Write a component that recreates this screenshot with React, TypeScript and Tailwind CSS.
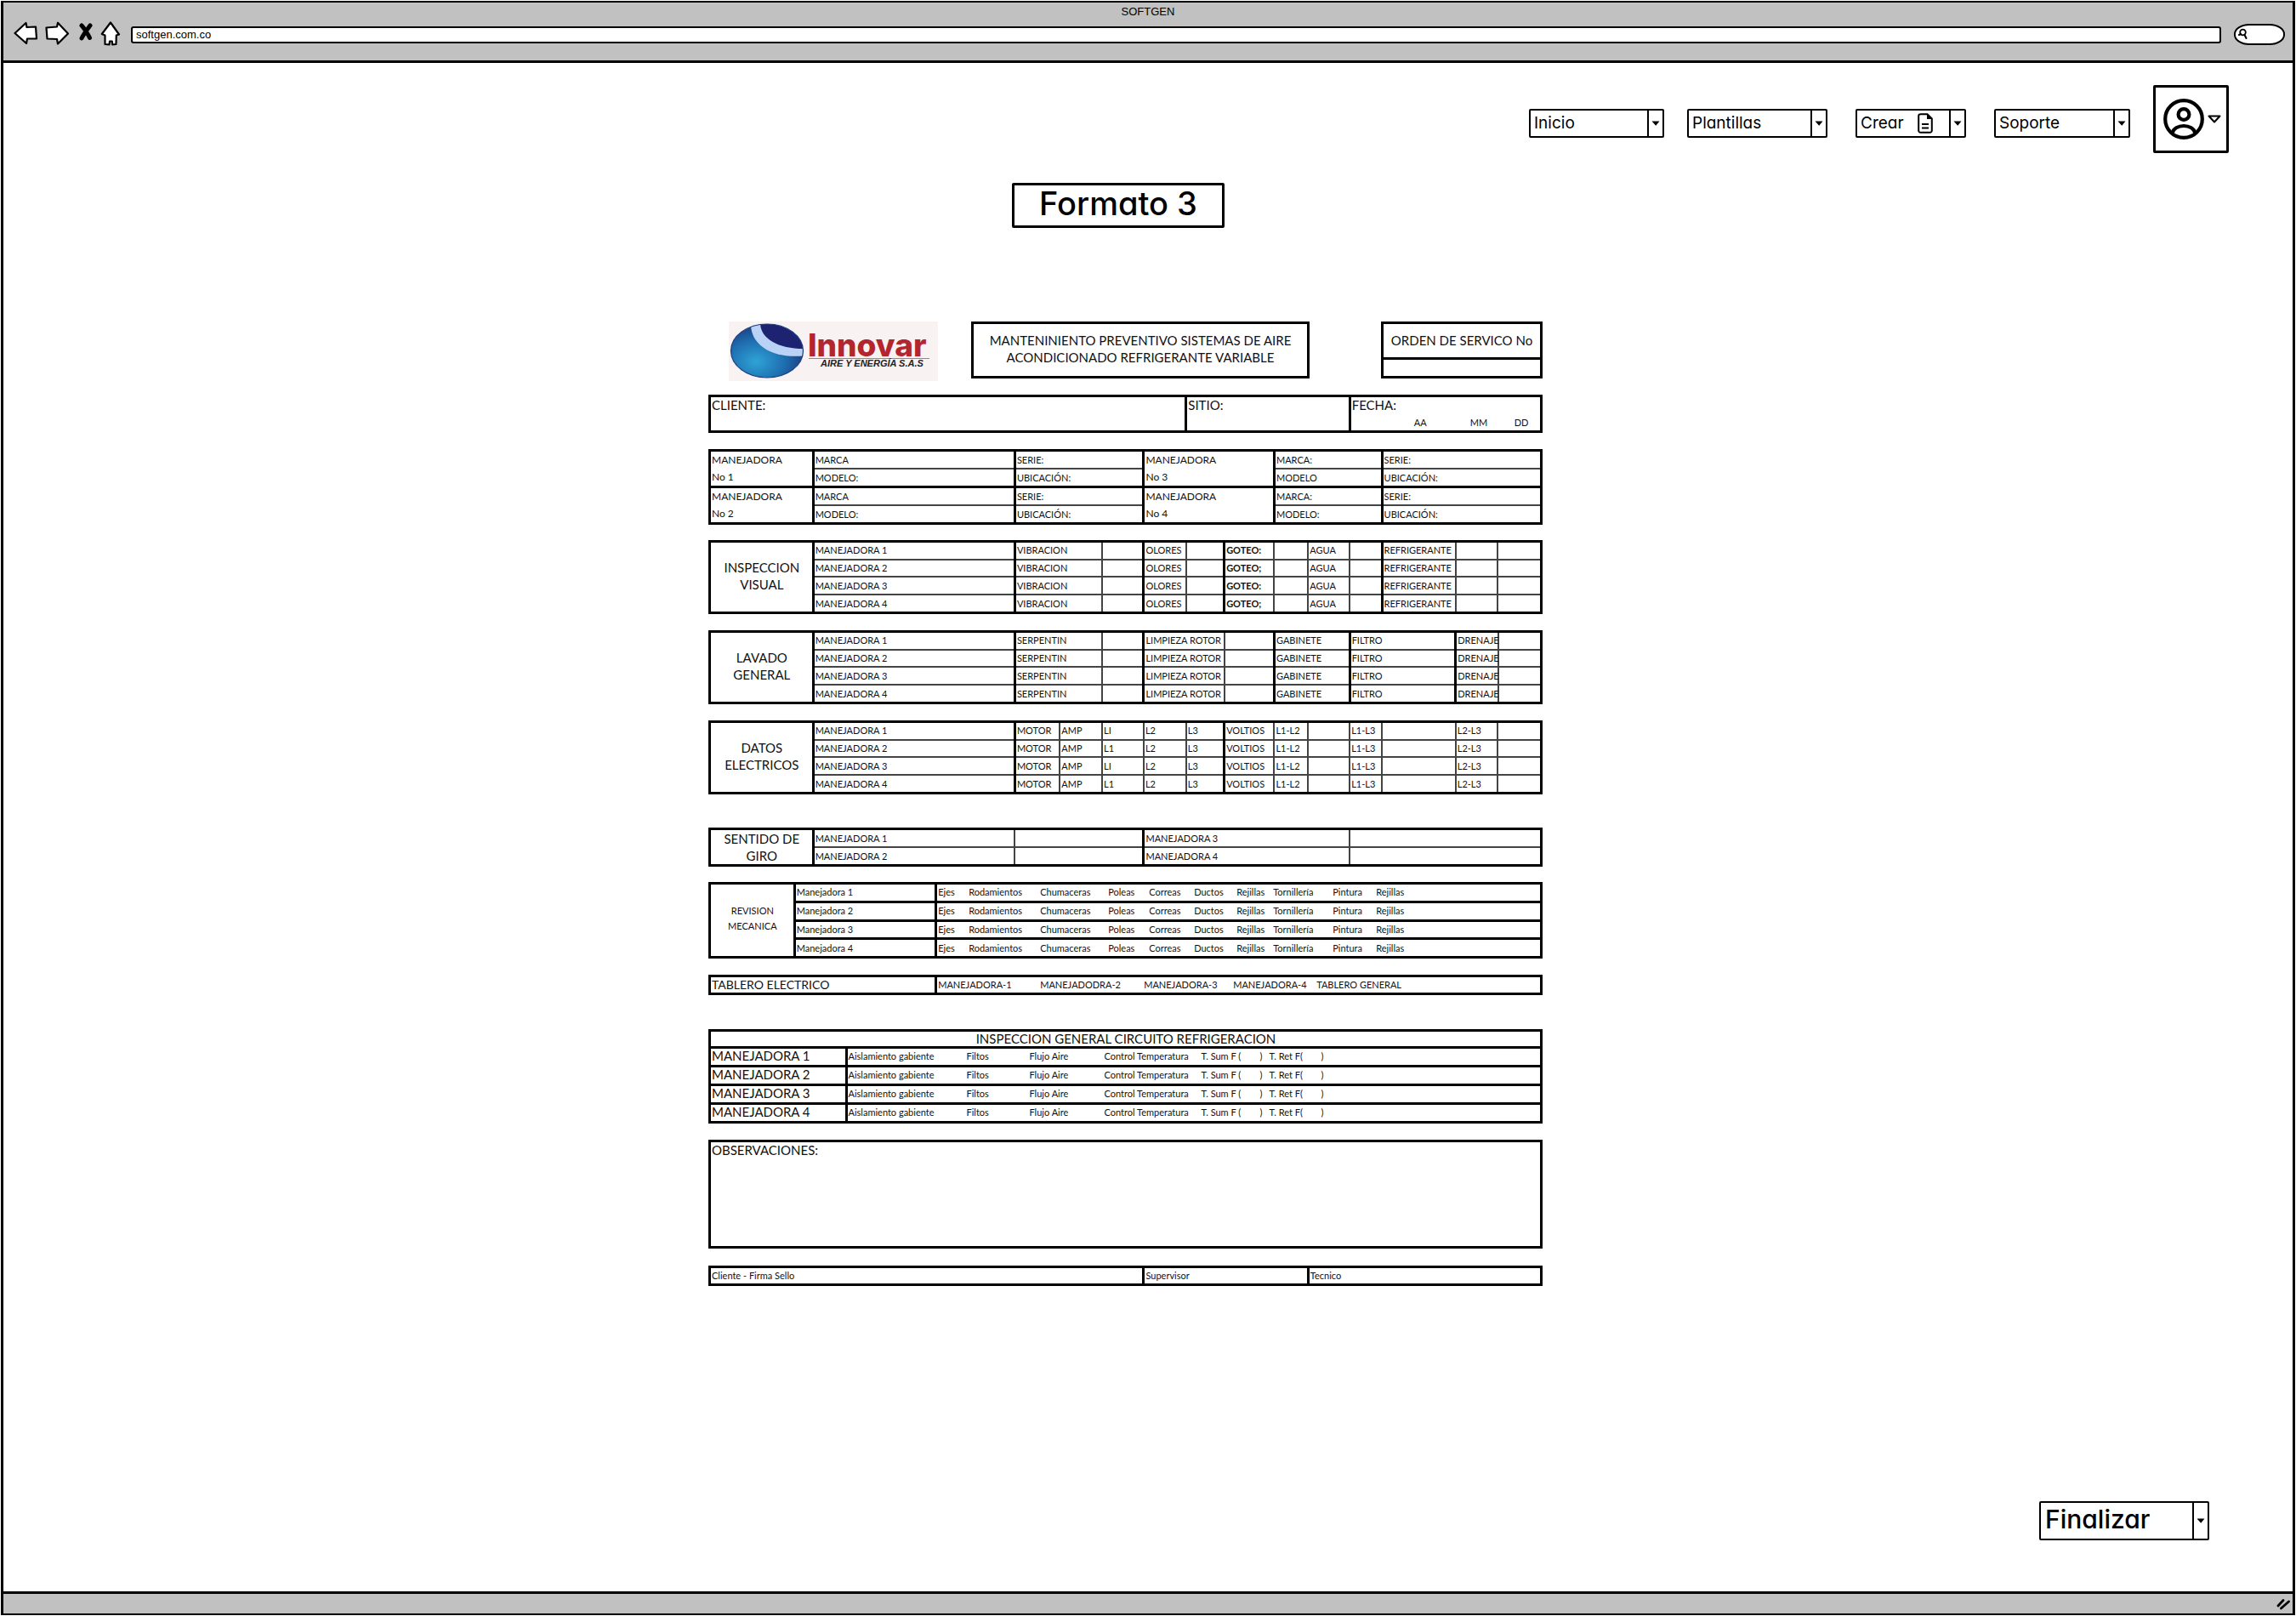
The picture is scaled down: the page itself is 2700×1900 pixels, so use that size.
import React from "react";

const THICK = "border-l-[3px] border-l-black";
const TOP = "border-t-[3px] border-t-black";
const HAND = "font-['Inter',sans-serif] [font-feature-settings:'cv11','ss03']";

/* ---------- wireframe controls ---------- */

type DropProps = {
  label: string;
  box: string;
  text: string;
  arrow: string;
  icon?: React.ReactNode;
};

function Drop({ label, box, text, arrow, icon }: DropProps) {
  return (
    <div className={`relative flex items-stretch rounded-[2px] border-2 border-black bg-white ${box}`}>
      <select aria-label={label} className={`w-full cursor-pointer appearance-none bg-transparent outline-none ${text}`}>
        <option>{label}</option>
      </select>
      {icon}
      <span className={`pointer-events-none absolute inset-y-0 right-0 flex items-center justify-center border-l-2 border-black ${arrow}`}>
        <svg viewBox="0 0 10 6" className="h-[6px] w-[10px]" aria-hidden="true">
          <path d="M0.5 0.5 L9.5 0.5 L5.2 5.8 Z" fill="#000" />
        </svg>
      </span>
    </div>
  );
}

function BrowserBar() {
  const btn = "flex items-center justify-center";
  return (
    <header className="flex h-[71px] flex-col border-b-[3px] border-black bg-[#c1c1c1] font-['Liberation_Sans',sans-serif] text-[13px] text-black">
      <div className="pt-[2px] text-center leading-[18px]">SOFTGEN</div>
      <div className="mt-px flex items-center pl-[12px] pr-[9px]">
        <button aria-label="Atrás" className={btn}>
          <svg viewBox="0 0 28 28" className="h-7 w-7">
            <path d="M1.5 14 L14.5 2 L15.5 7 L26 6.5 L27 20.5 L16 20.5 L15 26 Z" fill="#fff" stroke="#000" strokeWidth="2.2" strokeLinejoin="round" />
          </svg>
        </button>
        <button aria-label="Adelante" className={`ml-[9px] ${btn}`}>
          <svg viewBox="0 0 28 28" className="h-7 w-7">
            <path d="M1.5 7.5 L14 6.5 L15 1.8 L27 14.5 L15 26.5 L14 21 L2.5 20.5 Z" fill="#fff" stroke="#000" strokeWidth="2.2" strokeLinejoin="round" />
          </svg>
        </button>
        <button aria-label="Detener" className={`ml-[12px] ${btn}`}>
          <svg viewBox="0 0 16 28" className="h-7 w-4">
            <path d="M3 5 C5 7 10.500 15 12.500 19.500 M13 5 C10 9 6 14 3 20" fill="none" stroke="#000" strokeWidth="5" strokeLinecap="round" />
          </svg>
        </button>
        <button aria-label="Inicio" className={`ml-[9px] ${btn}`}>
          <svg viewBox="0 0 24 30" className="h-[30px] w-6">
            <path d="M12 2.5 L22 16.5 L18.8 17.5 L18.5 28 L14.2 28.3 L13.8 24.5 L11 24.5 L10.6 28.3 L5.5 28 L5.5 17.5 L1.8 16 Z" fill="#fff" stroke="#000" strokeWidth="2.2" strokeLinejoin="round" />
          </svg>
        </button>
        <input
          aria-label="Dirección"
          defaultValue="softgen.com.co"
          className="ml-[12px] mt-[3px] h-[20px] min-w-0 flex-1 rounded-[3px] border-2 border-black bg-white pl-[4px] leading-4 outline-none"
        />
        <label className="ml-[15px] mt-[2px] flex h-[25px] w-[60px] items-center rounded-[18px/12px] border-2 border-black bg-white pl-[3px]">
          <svg viewBox="0 0 12 14" className="h-[14px] w-3 shrink-0" aria-hidden="true">
            <circle cx="5.5" cy="5" r="3.3" fill="none" stroke="#000" strokeWidth="1.8" />
            <path d="M1 8 L3 7 M7.5 8 L9.5 12" stroke="#000" strokeWidth="2" strokeLinecap="round" />
          </svg>
          <input aria-label="Buscar" className="w-full min-w-0 bg-transparent outline-none" />
        </label>
      </div>
    </header>
  );
}

function FileIcon() {
  return (
    <svg viewBox="0 0 18 24" className="pointer-events-none absolute left-[71px] top-[3px] h-6 w-[18px]" aria-hidden="true">
      <path d="M3.5 1.2 H11.5 L16.8 6.5 V20.5 A2.3 2.3 0 0 1 14.5 22.8 H3.5 A2.3 2.3 0 0 1 1.2 20.5 V3.5 A2.3 2.3 0 0 1 3.5 1.2 Z" fill="none" stroke="#000" strokeWidth="2" />
      <path d="M11 1 V7 H17 Z" fill="#000" />
      <path d="M5 13 H13 M5 17.5 H13" stroke="#000" strokeWidth="2" />
    </svg>
  );
}

function NavBar() {
  const text = "pl-[4px] text-[19px] leading-6";
  return (
    <nav className={`flex items-center justify-end pr-[75px] pt-[26px] ${HAND}`}>
      <div className="mt-2.5 flex items-center">
        <Drop label="Inicio" box="h-[34px] w-[159px]" text={text} arrow="w-[18px]" />
        <Drop label="Plantillas" box="ml-[27px] h-[34px] w-[165px]" text={text} arrow="w-[18px]" />
        <Drop label="Crear" box="ml-[33px] h-[34px] w-[130px]" text={text} arrow="w-[18px]" icon={<FileIcon />} />
        <Drop label="Soporte" box="ml-[33px] h-[34px] w-[160px]" text={text} arrow="w-[18px]" />
      </div>
      <button aria-label="Cuenta" className="ml-[27px] flex h-[80px] w-[89px] items-center rounded-[2px] border-[3px] border-black pl-[9px]">
        <svg viewBox="0 0 48 48" className="h-12 w-12 shrink-0" aria-hidden="true">
          <defs>
            <clipPath id="face">
              <circle cx="24" cy="24" r="22" />
            </clipPath>
          </defs>
          <circle cx="24" cy="24" r="21.8" fill="none" stroke="#000" strokeWidth="4.2" />
          <circle cx="24" cy="18.5" r="6.4" fill="none" stroke="#000" strokeWidth="4.2" />
          <path d="M10.5 41 C12 29 36 29 37.500 41" fill="none" stroke="#000" strokeWidth="4.2" clipPath="url(#face)" />
        </svg>
        <svg viewBox="0 0 16 10" className="ml-[4px] h-[10px] w-4 shrink-0" aria-hidden="true">
          <path d="M1.500 1.500 H14.500 L8 8.500 Z" fill="#fff" stroke="#000" strokeWidth="2" strokeLinejoin="round" />
        </svg>
      </button>
    </nav>
  );
}

/* ---------- form sheet ---------- */

type Cell = { t?: React.ReactNode; c?: string; rs?: number; cs?: number };

function FormTable({ edges, rows, className, label }: { edges: number[]; rows: Cell[][]; className: string; label: string }) {
  const total = edges[edges.length - 1] - edges[0];
  return (
    <table aria-label={label} className={`w-full table-fixed border-collapse border-[3px] border-black text-[11px] leading-[14px] ${className}`}>
      <colgroup>
        {edges.slice(1).map((e, i) => (
          <col key={i} style={{ width: `${((e - edges[i]) / total) * 100}%` }} />
        ))}
      </colgroup>
      <tbody>
        {rows.map((r, i) => (
          <tr key={i}>
            {r.map((c, j) => (
              <td key={j} rowSpan={c.rs} colSpan={c.cs} className={`whitespace-nowrap border-2 border-[#444] p-0 pl-px ${c.c ?? ""}`}>
                {c.t}
              </td>
            ))}
          </tr>
        ))}
      </tbody>
    </table>
  );
}

const four = [1, 2, 3, 4];

function heading(a: string, b: string, rs: number): Cell {
  return {
    rs,
    c: `text-center text-[15px] leading-5 ${rs > 2 ? "pb-1" : ""}`,
    t: (
      <>
        {a}
        <br />
        {b}
      </>
    ),
  };
}

function unit(n: number, c: string): Cell {
  return {
    rs: 2,
    c: `text-[12px] leading-5 ${c}`,
    t: (
      <>
        MANEJADORA
        <br />
        No {n}
      </>
    ),
  };
}

function unitRows(a: number, b: number, modelo: string, top: string): Cell[][] {
  return [
    [
      unit(a, top),
      { t: "MARCA", c: `${THICK} ${top}` },
      { t: "SERIE:", c: `${THICK} ${top}` },
      unit(b, `${THICK} ${top}`),
      { t: "MARCA:", c: `${THICK} ${top}` },
      { t: "SERIE:", c: `${THICK} ${top}` },
    ],
    [
      { t: "MODELO:", c: THICK },
      { t: "UBICACIÓN:", c: THICK },
      { t: modelo, c: THICK },
      { t: "UBICACIÓN:", c: THICK },
    ],
  ];
}

function Logo() {
  return (
    <svg viewBox="0 0 246 70" className="h-[70px] w-[246px]" role="img" aria-label="Innovar Aire y Energía S.A.S">
      <defs>
        <radialGradient id="sea" cx="0.35" cy="0.7" r="0.7">
          <stop offset="0" stopColor="#2fa3d6" />
          <stop offset="0.55" stopColor="#1f6fb0" />
          <stop offset="1" stopColor="#1b3a7e" />
        </radialGradient>
        <clipPath id="globe">
          <ellipse cx="45" cy="34.500" rx="42.500" ry="31.500" />
        </clipPath>
      </defs>
      <rect width="246" height="70" fill="#f8f2f3" />
      <ellipse cx="45" cy="34.500" rx="42.500" ry="31.500" fill="url(#sea)" />
      <g clipPath="url(#globe)">
        <path d="M26 0 C24 28 52 45 92 40 L92 0 Z" fill="#b9d2f6" />
        <path d="M37 0 C36 20 58 33 92 32 L92 0 Z" fill="#1d2370" />
      </g>
      <ellipse cx="45" cy="34.500" rx="42.500" ry="31.500" fill="none" stroke="#1c3f82" strokeWidth="1.200" />
      <text x="93" y="41" fontFamily="Inter" fontWeight="800" fontSize="37" fill="#b3262e">
        Innovar
      </text>
      <path d="M94 43.500 H236" stroke="#8a8a90" strokeWidth="1" />
      <text x="108" y="53" fontFamily="Liberation Sans" fontWeight="700" fontStyle="italic" fontSize="11" fill="#222">
        AIRE Y ENERGÍA S.A.S
      </text>
    </svg>
  );
}

function Sheet() {
  return (
    <section className="mt-[110px] flex flex-col font-['Lato',sans-serif] text-[#111]">
      <div className="flex items-start">
        <div className="ml-[24px] shrink-0">
          <Logo />
        </div>
        <div className="ml-[39px] flex h-[67px] w-[398px] items-center justify-center border-[3px] border-black pb-[3px] text-center text-[15px] leading-5">
          MANTENINIENTO PREVENTIVO SISTEMAS DE AIRE
          <br />
          ACONDICIONADO REFRIGERANTE VARIABLE
        </div>
        <div className="ml-auto flex h-[67px] w-[190px] flex-col border-[3px] border-black text-center text-[15px]">
          <div className="flex-1 border-b-[3px] border-black leading-[38px]">ORDEN DE SERVICO No</div>
          <div className="h-[19px]" />
        </div>
      </div>

      <FormTable
        label="Cliente"
        className="mt-4 h-[45px]"
        edges={[833, 1395, 1588, 1814]}
        rows={[
          [
            { t: "CLIENTE:", c: "align-top text-[15px] leading-[18px] pl-[2px]" },
            { t: "SITIO:", c: `align-top text-[15px] leading-[18px] pl-[2px] ${THICK}` },
            {
              c: `align-top pl-[2px] ${THICK}`,
              t: (
                <>
                  <div className="text-[15px] leading-[18px]">FECHA:</div>
                  <div className="grid grid-cols-[66px_52px_32px] pl-[73px] pt-[5px]">
                    <span>AA</span>
                    <span>MM</span>
                    <span>DD</span>
                  </div>
                </>
              ),
            },
          ],
        ]}
      />

      <FormTable
        label="Manejadoras"
        className="mt-[19px] h-[88px]"
        edges={[833, 955, 1193, 1345, 1499, 1626, 1814]}
        rows={[...unitRows(1, 3, "MODELO", ""), ...unitRows(2, 4, "MODELO:", TOP)]}
      />

      <FormTable
        label="Inspección visual"
        className="mt-[18px] h-[87px]"
        edges={[833, 955, 1193, 1296, 1345, 1395, 1440, 1499, 1539, 1588, 1626, 1713, 1762, 1814]}
        rows={four.map((n) => [
          ...(n === 1 ? [heading("INSPECCION", "VISUAL", 4)] : []),
          { t: `MANEJADORA ${n}`, c: THICK },
          { t: "VIBRACION", c: THICK },
          {},
          { t: "OLORES", c: THICK },
          {},
          { t: n % 2 ? "GOTEO:" : "GOTEO;", c: `font-bold ${THICK}` },
          {},
          { t: "AGUA", c: "pl-[2px]" },
          {},
          { t: "REFRIGERANTE", c: THICK },
          {},
          {},
        ])}
      />

      <FormTable
        label="Lavado general"
        className="mt-[19px] h-[87px]"
        edges={[833, 955, 1193, 1296, 1345, 1440, 1499, 1588, 1713, 1763, 1814]}
        rows={four.map((n) => [
          ...(n === 1 ? [heading("LAVADO", "GENERAL", 4)] : []),
          { t: `MANEJADORA ${n}`, c: THICK },
          { t: "SERPENTIN", c: THICK },
          {},
          { t: "LIMPIEZA ROTOR", c: THICK },
          {},
          { t: "GABINETE", c: THICK },
          { t: "FILTRO", c: THICK },
          { t: "DRENAJE", c: `pl-0 ${THICK}` },
          {},
        ])}
      />

      <FormTable
        label="Datos eléctricos"
        className="mt-[19px] h-[87px]"
        edges={[833, 955, 1193, 1246, 1296, 1345, 1395, 1440, 1499, 1539, 1588, 1626, 1713, 1762, 1814]}
        rows={four.map((n) => [
          ...(n === 1 ? [heading("DATOS", "ELECTRICOS", 4)] : []),
          { t: `MANEJADORA ${n}`, c: THICK },
          { t: "MOTOR", c: THICK },
          { t: "AMP", c: "pl-[2px]" },
          { t: n % 2 ? "LI" : "L1", c: "pl-[2px]" },
          { t: "L2", c: "pl-[2px]" },
          { t: "L3", c: "pl-[2px]" },
          { t: "VOLTIOS", c: THICK },
          { t: "L1-L2", c: "pl-[2px]" },
          {},
          { t: "L1-L3", c: "pl-[2px]" },
          {},
          { t: "L2-L3", c: "pl-[2px]" },
          {},
        ])}
      />

      <FormTable
        label="Sentido de giro"
        className="mt-[39px] h-[46px]"
        edges={[833, 955, 1193, 1345, 1588, 1814]}
        rows={[
          [
            heading("SENTIDO DE", "GIRO", 2),
            { t: "MANEJADORA 1", c: THICK },
            {},
            { t: "MANEJADORA 3", c: THICK },
            {},
          ],
          [{ t: "MANEJADORA 2", c: THICK }, {}, { t: "MANEJADORA 4", c: THICK }, {}],
        ]}
      />

      <FormTable
        label="Revisión mecánica"
        className="mt-[18px] h-[90px]"
        edges={[833, 933, 1100, 1814]}
        rows={four.map((n) => [
          ...(n === 1
            ? [
                {
                  rs: 4,
                  c: "pb-1 text-center leading-[18px]",
                  t: (
                    <>
                      REVISION
                      <br />
                      MECANICA
                    </>
                  ),
                },
              ]
            : []),
          { t: `Manejadora ${n}`, c: `${THICK} ${TOP}` },
          {
            c: `${THICK} ${TOP}`,
            t: (
              <div className="grid grid-cols-[36px_84px_80px_48px_53px_50px_43px_70px_51px_auto]">
                {["Ejes", "Rodamientos", "Chumaceras", "Poleas", "Correas", "Ductos", "Rejillas", "Tornillería", "Pintura", "Rejillas"].map((w, i) => (
                  <span key={i}>{w}</span>
                ))}
              </div>
            ),
          },
        ])}
      />

      <FormTable
        label="Tablero eléctrico"
        className="mt-[19px] h-[24px]"
        edges={[833, 1100, 1814]}
        rows={[
          [
            { t: "TABLERO ELECTRICO", c: "text-[14px] pl-[2px]" },
            {
              c: THICK,
              t: (
                <div className="grid grid-cols-[120px_122px_105px_98px_auto]">
                  <span>MANEJADORA-1</span>
                  <span>MANEJADODRA-2</span>
                  <span>MANEJADORA-3</span>
                  <span>MANEJADORA-4</span>
                  <span>TABLERO GENERAL</span>
                </div>
              ),
            },
          ],
        ]}
      />

      <FormTable
        label="Inspección general circuito refrigeración"
        className="mt-[40px] h-[111px]"
        edges={[833, 994, 1814]}
        rows={[
          [{ t: "INSPECCION GENERAL CIRCUITO REFRIGERACION", cs: 2, c: "text-center text-[15px]" }],
          ...four.map((n) => [
            { t: `MANEJADORA ${n}`, c: `${TOP} pl-[2px] pb-[2px] text-[15px]` },
            {
              c: `${TOP} ${THICK}`,
              t: (
                <div className="grid grid-cols-[139px_74px_88px_114px_69px_11px_61px_auto]">
                  <span>Aislamiento gabiente</span>
                  <span>Filtos</span>
                  <span>Flujo Aire</span>
                  <span>Control Temperatura</span>
                  <span>T. Sum F (</span>
                  <span>)</span>
                  <span>T. Ret F(</span>
                  <span>)</span>
                </div>
              ),
            },
          ]),
        ]}
      />

      <FormTable
        label="Observaciones"
        className="mt-[19px] h-[128px]"
        edges={[833, 1814]}
        rows={[[{ t: "OBSERVACIONES:", c: "align-top text-[15px] leading-[18px] pl-[2px]" }]]}
      />

      <FormTable
        label="Firmas"
        className="mt-[20px] h-[24px]"
        edges={[833, 1345, 1539, 1814]}
        rows={[[{ t: "Cliente - Firma Sello" }, { t: "Supervisor", c: THICK }, { t: "Tecnico", c: THICK }]]}
      />
    </section>
  );
}

export default function App() {
  return (
    <div className="flex min-h-screen flex-col bg-white p-px text-black">
      <div className="flex flex-1 flex-col border-[3px] border-t-2 border-b-2 border-black">
        <BrowserBar />
        <NavBar />
        <main className="grid flex-1 grid-cols-[829fr_981fr_882fr]">
          <div className="col-start-2">
            <div className="mt-[35px] flex justify-center pr-[17px]">
              <h1 className={`flex h-[53px] w-[250px] items-center justify-center rounded-[2px] border-[3px] border-black pb-[5px] text-[38px] leading-none font-medium ${HAND}`}>
                Formato 3
              </h1>
            </div>
            <Sheet />
          </div>
          <div className={`flex items-end justify-end pr-[98px] pb-[60px] ${HAND}`}>
            <Drop label="Finalizar" box="h-[46px] w-[200px]" text="pl-[5px] pb-[4px] text-[30px] leading-9 font-medium" arrow="w-[18px]" />
          </div>
        </main>
        <footer className="flex h-[26px] items-center justify-end border-t-[3px] border-black bg-[#c1c1c1] pr-[3px]">
          <svg viewBox="0 0 16 14" className="h-[14px] w-4" aria-hidden="true">
            <path d="M2 9 L8 2.500 M5.500 12 L14.500 4" stroke="#000" strokeWidth="2.800" strokeLinecap="round" />
          </svg>
        </footer>
      </div>
    </div>
  );
}
